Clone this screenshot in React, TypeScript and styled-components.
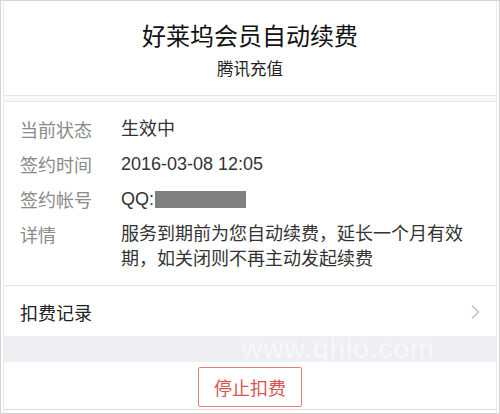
import React from "react";
import styled, { createGlobalStyle } from "styled-components";

const Global = createGlobalStyle`
  html, body { margin: 0; padding: 0; background: #fff; }
  body { font-family: "Noto Sans CJK SC", "Noto Sans", sans-serif; }
`;

const Frame = styled.div`
  width: 500px;
  height: 414px;
  box-sizing: border-box;
  border: 1px solid #d4d4d4;
  padding: 0 2px;
  overflow: hidden;
`;

const Card = styled.div`
  height: 100%;
  border-left: 1px solid #ececec;
  border-right: 1px solid #ececec;
  display: flex;
  flex-direction: column;
`;

const Header = styled.header`
  height: 95px;
  border-bottom: 1px solid #e6e6e6;
  display: flex;
  flex-direction: column;
  align-items: center;
  padding-top: 16px;
  box-sizing: border-box;
`;

const Title = styled.h1`
  margin: 0;
  font-size: 24px;
  font-weight: 400;
  line-height: 36px;
  color: #111;
`;

const Subtitle = styled.div`
  font-size: 16.5px;
  line-height: 26px;
  margin-top: 2px;
  color: #222;
`;

const Spacer = styled.div`
  height: 5px;
  background: #f8f8f8;
`;

const Info = styled.dl`
  margin: 0;
  border-top: 1px solid #e6e6e6;
  border-bottom: 1px solid #e6e6e6;
  padding: 15px 22px 13px 16px;
  display: grid;
  grid-template-columns: 101px 1fr;
  row-gap: 10px;
  font-size: 18px;
  line-height: 25px;
`;

const Label = styled.dt`
  color: #8a8a8a;
`;

const Value = styled.dd`
  margin: 0;
  color: #333;
  display: flex;
  align-items: center;
  font-family: "Liberation Sans", "Noto Sans CJK SC", sans-serif;
`;

const Masked = styled.span`
  display: inline-block;
  width: 91px;
  height: 17px;
  margin-left: 1px;
  background: #808080;
`;

const RecordRow = styled.div`
  height: 50px;
  display: flex;
  align-items: center;
  justify-content: space-between;
  padding: 2px 16px 0 16px;
  box-sizing: border-box;
  font-size: 18px;
  color: #222;
`;

const Band = styled.div`
  position: relative;
  height: 26px;
  background: #eeeef3;
`;

const Watermark = styled.span`
  position: absolute;
  left: 238px;
  top: 0;
  font-family: "Liberation Sans", sans-serif;
  font-size: 28px;
  line-height: 26px;
  letter-spacing: 1px;
  color: #fff;
  opacity: 0.6;
`;

const Footer = styled.div`
  flex: 1;
  display: flex;
  justify-content: center;
  padding-top: 5px;
  border-bottom: 1px solid #dcdcdc;
  margin-bottom: 3px;
`;

const StopButton = styled.button`
  width: 104px;
  height: 40px;
  border: 1px solid #e28080;
  border-radius: 2px;
  background: #fff;
  color: #d9534f;
  font-family: "Noto Sans CJK SC", sans-serif;
  font-size: 18px;
  padding: 0;
`;

const Chevron = () => (
  <svg width="10" height="16" viewBox="0 0 10 16">
    <path d="M2 1.5 L8.5 8 L2 14.5" fill="none" stroke="#c2c2c2" strokeWidth="1.6" />
  </svg>
);

export default function App() {
  return (
    <>
      <Global />
      <Frame>
        <Card>
          <Header>
            <Title>好莱坞会员自动续费</Title>
            <Subtitle>腾讯充值</Subtitle>
          </Header>
          <Spacer />
          <Info>
            <Label>当前状态</Label>
            <Value>生效中</Value>
            <Label>签约时间</Label>
            <Value>2016-03-08 12:05</Value>
            <Label>签约帐号</Label>
            <Value>
              QQ:<Masked />
            </Value>
            <Label>详情</Label>
            <Value>服务到期前为您自动续费，延长一个月有效期，如关闭则不再主动发起续费</Value>
          </Info>
          <RecordRow>
            <span>扣费记录</span>
            <Chevron />
          </RecordRow>
          <Band>
            <Watermark>www.qhlo.com</Watermark>
          </Band>
          <Footer>
            <StopButton>停止扣费</StopButton>
          </Footer>
        </Card>
      </Frame>
    </>
  );
}
